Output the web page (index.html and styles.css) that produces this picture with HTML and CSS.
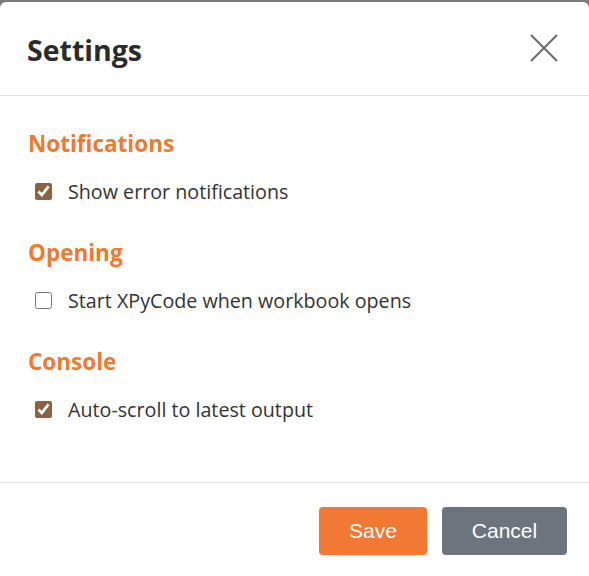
FILE: index.html
```html
<!DOCTYPE html>
<html>
<head>
<meta charset="utf-8">
<link rel="stylesheet" href="styles.css">
</head>
<body>
<div class="modal">
  <div class="header">
    <h1 class="title">Settings</h1>
    <button class="close" aria-label="Close">
      <svg width="30" height="30" viewBox="0 0 30 30"><path d="M2 2 L28 28 M28 2 L2 28" stroke="#6b6b6b" stroke-width="2" fill="none"/></svg>
    </button>
  </div>
  <div class="body">
    <h2 class="section">Notifications</h2>
    <label class="row"><input type="checkbox" checked><span>Show error notifications</span></label>
    <h2 class="section">Opening</h2>
    <label class="row"><input type="checkbox"><span>Start XPyCode when workbook opens</span></label>
    <h2 class="section">Console</h2>
    <label class="row"><input type="checkbox" checked><span>Auto-scroll to latest output</span></label>
  </div>
  <div class="footer">
    <button class="btn save">Save</button>
    <button class="btn cancel">Cancel</button>
  </div>
</div>
</body>
</html>
```
FILE: styles.css
```css
html, body { margin: 0; padding: 0; }
body {
  background: #7b7b7b;
  width: 589px;
  height: 576px;
  overflow: hidden;
  font-family: "Open Sans", "Noto Sans", sans-serif;
}
.modal {
  margin-top: 2px;
  background: #fff;
  border-radius: 6px 6px 0 0;
  height: 574px;
  display: flex;
  flex-direction: column;
}
.header {
  height: 94px;
  border-bottom: 1px solid #dedede;
  display: flex;
  align-items: center;
  justify-content: space-between;
  padding: 2px 30px 0 27px;
  box-sizing: border-box;
}
.title {
  margin: 0;
  font-size: 28.5px;
  font-weight: 700;
  color: #2b2b2b;
  letter-spacing: 0;
}
.close {
  border: 0;
  background: none;
  padding: 0;
  width: 30px;
  height: 30px;
  display: flex;
  margin-top: -4px;
}
.body {
  padding: 30px 28px 0 28px;
  height: 387px;
  box-sizing: border-box;
  border-bottom: 1px solid #dedede;
}
.section {
  margin: 0;
  font-size: 22.5px;
  font-weight: 700;
  color: #f07a30;
  line-height: 36px;
}
.section + .row { margin-top: 11px; }
.row {
  display: flex;
  align-items: center;
  height: 36px;
  margin-bottom: 26px;
  padding-left: 7px;
  font-size: 19.7px;
  color: #333;
}
.row input {
  width: 17px;
  height: 17px;
  margin: 0 16px 0 0;
  accent-color: #8c6144;
}
.footer {
  display: flex;
  justify-content: flex-end;
  gap: 15px;
  padding: 24px 22px 0 0;
}
.btn {
  height: 48px;
  border: 0;
  border-radius: 4px;
  color: #fff;
  font-family: "Liberation Sans", Arial, sans-serif;
  font-size: 21px;
}
.save { background: #f27933; width: 108px; }
.cancel { background: #6c757d; width: 125px; }
```
